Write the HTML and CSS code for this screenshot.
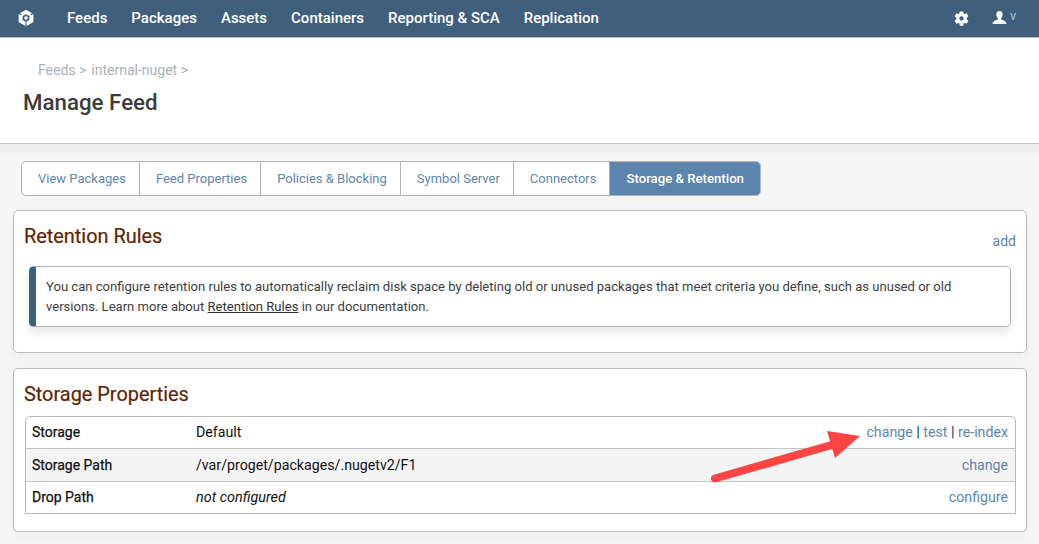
FILE: index.html
```html
<!DOCTYPE html>
<html lang="en">
<head>
<meta charset="utf-8">
<title>Manage Feed</title>
<link rel="stylesheet" href="styles.css">
</head>
<body>
<nav class="topnav">
  <svg class="logo" width="18" height="18" viewBox="0 0 18 18"><path fill="#fff" fill-rule="evenodd" d="M9 .8l7.400 4.200v8L9 17.200 1.600 13V5zM9 5.200L5.600 7.100v3.900L9 13l3.400-2V7.100z"/><path fill="#3f5f7d" d="M1.600 5l2.200 1.300.6-1L2.600 4zM16.400 5l-2.200 1.300-.6-1L15.400 4zM8.400 13.500h1.200v3.700H8.400z"/><circle cx="9" cy="9" r="1.800" fill="#fff"/></svg>
  <div class="navlinks">
    <a>Feeds</a><a>Packages</a><a>Assets</a><a>Containers</a><a>Reporting &amp; SCA</a><a>Replication</a>
  </div>
  <div class="navright">
    <svg class="gear" width="15" height="15" viewBox="0 0 16 16"><path fill="#fff" fill-rule="evenodd" d="M6.200.4h3.600l.5 2.200 1 .6 2.200-.7 1.800 3.100-1.700 1.500v1.800l1.700 1.500-1.800 3.100-2.200-.7-1 .6-.5 2.200H6.200l-.5-2.200-1-.6-2.200.7L.7 10.400l1.700-1.500V7.100L.7 5.600l1.800-3.100 2.200.7 1-.6zM8 5.700a2.300 2.300 0 1 0 0 4.600 2.300 2.300 0 0 0 0-4.600z"/></svg>
    <svg class="user" width="15" height="14" viewBox="0 0 15 14"><path fill="#fff" d="M7.500 0c2 0 3.200 1.500 3.200 3.600 0 1.500-.7 3-1.600 3.700v1.100c2.300.7 5.200 1.500 5.400 4.600H.5c.2-3.100 3.100-3.900 5.400-4.600V7.300C5 6.600 4.300 5.100 4.300 3.600 4.300 1.500 5.500 0 7.500 0z"/></svg>
    <span class="caret">V</span>
  </div>
</nav>
<header class="pagehead">
  <div class="crumbs"><span>Feeds &gt;</span><span>internal-nuget &gt;</span></div>
  <h1>Manage Feed</h1>
</header>
<main class="content">
  <div class="tabs">
    <a class="tab">View Packages</a><a class="tab">Feed Properties</a><a class="tab">Policies &amp; Blocking</a><a class="tab">Symbol Server</a><a class="tab">Connectors</a><a class="tab active">Storage &amp; Retention</a>
  </div>
  <section class="panel retention">
    <div class="panelhead"><h2>Retention Rules</h2><a class="link addlink">add</a></div>
    <div class="info">You can configure retention rules to automatically reclaim disk space by deleting old or unused packages that meet criteria you define, such as unused or old versions. Learn more about <u>Retention Rules</u> in our documentation.</div>
  </section>
  <section class="panel storage">
    <h2>Storage Properties</h2>
    <div class="proptable">
      <div class="row"><div class="key">Storage</div><div class="val">Default</div><div class="act"><a class="link">change</a><span class="sep">|</span><a class="link">test</a><span class="sep">|</span><a class="link">re-index</a></div></div>
      <div class="row alt"><div class="key">Storage Path</div><div class="val">/var/proget/packages/.nugetv2/F1</div><div class="act"><a class="link">change</a></div></div>
      <div class="row"><div class="key">Drop Path</div><div class="val"><em>not configured</em></div><div class="act"><a class="link">configure</a></div></div>
    </div>
  </section>
</main>
<svg class="arrow" width="160" height="60" viewBox="0 0 160 60"><path d="M4 51.500L124 17" fill="none" stroke="#ff4444" stroke-width="8" stroke-linecap="round"/><path fill="#ff4444" d="M116 4l33 5-25 22z"/></svg>
</body>
</html>
```
FILE: styles.css
```css
* { box-sizing: border-box; }
html, body { margin: 0; padding: 0; }
body {
  height: 544px;
  overflow: hidden;
  background: #f5f5f5;
  font-family: Roboto, "Liberation Sans", sans-serif;
  font-size: 14px;
  color: #333;
  position: relative;
}
.topnav {
  height: 38px;
  background: #3f5f7d;
  border-bottom: 1px solid #b5bcc4;
  display: flex;
  align-items: center;
  padding: 0 23px 2px 17px;
}
.logo { flex: none; }
.navlinks { display: flex; gap: 24px; margin-left: 32px; }
.navlinks a { color: #fff; font-size: 15px; font-weight: 500; }
.navright { margin-left: auto; display: flex; align-items: center; }
.gear { margin-right: 23px; margin-top: 2px; }
.user { margin-right: 3px; }
.caret { color: #c5d6e6; font-size: 9px; margin-top: -1px; }
.pagehead {
  height: 106px;
  background: #fff;
  border-bottom: 1px solid #c4c4c4;
  padding: 24px 23px 0;
}
.crumbs {
  display: flex;
  gap: 5px;
  padding-left: 15px;
  color: #a9b1bb;
  font-size: 14px;
  line-height: 16px;
}
h1 {
  margin: 10px 0 0;
  font-size: 22.300px;
  font-weight: 500;
  line-height: 28px;
  color: #3c3c3c;
}
.content {
  padding: 17px 12px 0 13px;
  background: linear-gradient(#ececec, #f5f5f5 12px);
}
.tabs {
  display: inline-flex;
  margin-left: 8px;
  height: 35px;
  background: #fff;
  border: 1px solid #b4b4b4;
  border-radius: 5px;
  overflow: hidden;
  vertical-align: top;
}
.tab {
  display: flex;
  align-items: center;
  padding: 0 13px 0 16px;
  color: #5d86ad;
  font-size: 13px;
  border-right: 1px solid #b4b4b4;
}
.tab:first-child { border-left: 0; }
.tab.active {
  background: #5b85ad;
  color: #fff;
  font-size: 13.200px;
  font-weight: 500;
  border-right: 0;
  padding: 0 16px;
}
.panel {
  background: #fff;
  border: 1px solid #bcbcbc;
  border-radius: 5px;
  padding: 0 10px;
  box-shadow: 0 4px 12px rgba(0, 0, 0, .03);
}
.retention { margin-top: 14px; height: 143px; padding-top: 12px; }
.storage { margin-top: 15px; height: 164px; padding: 12px 10px 0; }
.panelhead { display: flex; justify-content: space-between; align-items: flex-start; }
h2 {
  margin: 0;
  font-size: 19.900px;
  font-weight: 400;
  line-height: 28px;
  color: #5f2404;
  -webkit-text-stroke: .2px #5f2404;
}
.link { color: #5d86ad; }
.addlink { margin: 10px 0 0 0; font-size: 14px; line-height: 16px; }
.info {
  margin: 15px 5px 0 5px;
  height: 61px;
  background: #fff;
  border: 1px solid #b4b4b4;
  border-left: 7px solid #3f5f7d;
  border-radius: 5px;
  padding: 10px 10px 0;
  font-size: 13.070px;
  line-height: 20px;
  color: #3e3e3e;
  box-shadow: 0 5px 10px rgba(0, 0, 0, .1);
}
.info u { color: #333; }
.proptable {
  margin: 7px 0 0 1px;
  border: 1px solid #b8b8b8;
  border-radius: 5px 5px 0 0;
  overflow: hidden;
}
.row {
  display: flex;
  align-items: center;
  height: 32px;
  padding: 0 7px 1px 6px;
  border-top: 1px solid #c4c4c4;
  font-size: 14px;
  color: #111;
}
.row:first-child { border-top: 0; height: 31px; }
.row.alt { background: #f4f4f4; height: 33px; padding-bottom: 0; }
.key { width: 164px; font-weight: 400; -webkit-text-stroke: .25px #111; }
.val { flex: 1; font-size: 14.200px; }
.val em { font-size: 14.400px; }
.act { display: flex; gap: 3.500px; font-size: 14.200px; }
.sep { color: #1b4a78; font-weight: 700; }
.arrow { position: absolute; left: 711px; top: 427px; }
```
